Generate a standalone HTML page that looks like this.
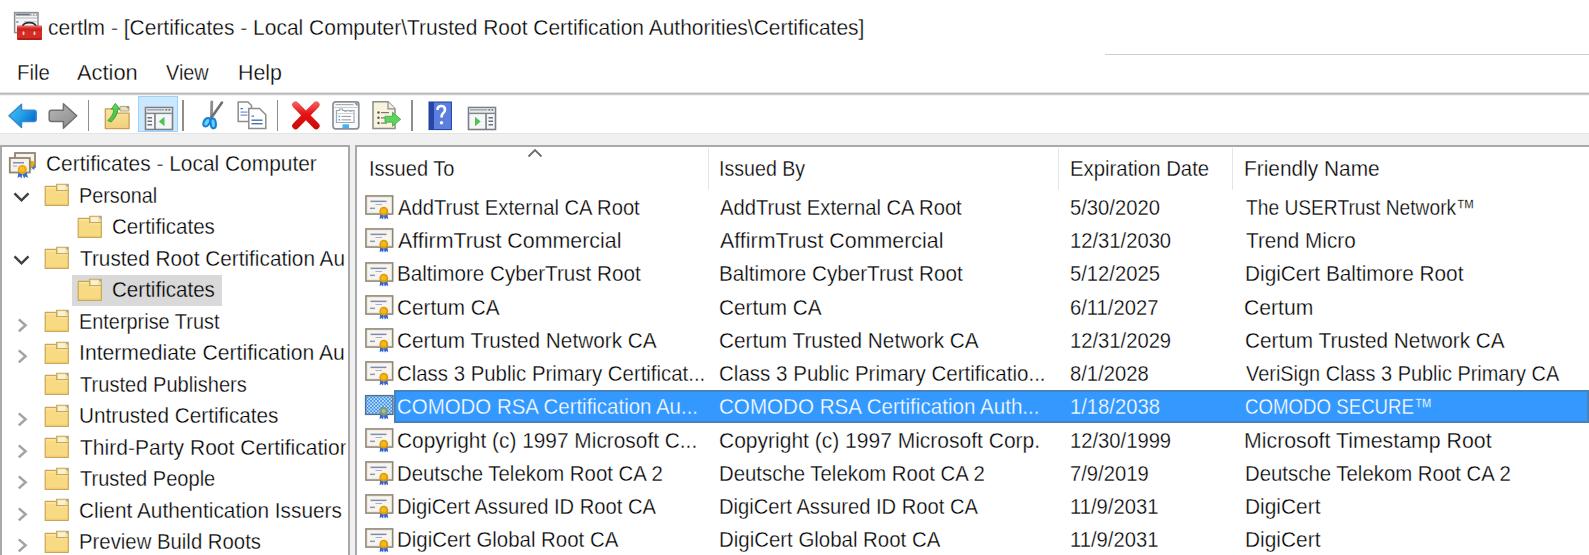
<!DOCTYPE html>
<html><head><meta charset="utf-8"><style>
html,body{margin:0;padding:0;}
body{width:1589px;height:555px;overflow:hidden;position:relative;background:#fff;font-family:"Liberation Sans",sans-serif;}
.abs{position:absolute;}
.ic{position:absolute;overflow:visible;}
.t{position:absolute;white-space:pre;font-size:21px;line-height:24px;transform-origin:0 19.5px;color:#000;-webkit-text-stroke:0.3px #fff;}
</style></head><body>
<div class="abs" style="left:1105px;top:54px;width:484px;height:1px;background:#cfcfcf"></div>
<svg class="ic" style="left:13px;top:11px" width="31" height="31" viewBox="0 0 31 31">
<rect x="1.6" y="1.6" width="23.4" height="20" fill="#f3f4f6" stroke="#8c9198" stroke-width="1.5"/>
<rect x="2.4" y="2.4" width="21.8" height="2.4" fill="#a2a7ae"/>
<rect x="3.5" y="2.9" width="13" height="1.2" fill="#6f747c"/><rect x="18.5" y="2.8" width="1.5" height="1.5" fill="#fff"/><rect x="21.5" y="2.8" width="1.5" height="1.5" fill="#fff"/>
<rect x="2.4" y="6.5" width="21.8" height="1" fill="#b2b7be"/>
<rect x="3.2" y="10" width="2.2" height="2" fill="#9aa0a8"/>
<rect x="11" y="10.2" width="12.5" height="1" fill="#b8bcc2"/>
<path d="M9.5 15.5 Q10.5 11.6 16.3 11.6 Q22 11.6 23 15.5" fill="none" stroke="#2e2e2e" stroke-width="1.8"/>
<path d="M4 14.8 H29 V27.6 Q29 29 27.6 29 H5.4 Q4 29 4 27.6 Z" fill="#d42d26"/>
<rect x="4" y="14.8" width="25" height="1.6" fill="#e8605a"/>
<rect x="4" y="18.5" width="25" height="1" fill="#b82018"/>
<ellipse cx="10.5" cy="22.2" rx="1" ry="2" fill="#f4c4be"/>
<ellipse cx="21.5" cy="22.2" rx="1" ry="2" fill="#f4c4be"/>
<rect x="4.5" y="27" width="24" height="2" fill="#b31d18"/>
</svg>
<div class="t" style="left:47.50px;top:15.50px;transform:scale(0.9988,1.055);color:#000;">certlm - [Certificates - Local Computer\Trusted Root Certification Authorities\Certificates]</div>
<div class="t" style="left:17.33px;top:60.70px;transform:scale(0.9702,1.055);color:#000;">File</div>
<div class="t" style="left:77.40px;top:60.70px;transform:scale(1.0401,1.055);color:#000;">Action</div>
<div class="t" style="left:166.00px;top:60.70px;transform:scale(0.9462,1.055);color:#000;">View</div>
<div class="t" style="left:237.68px;top:60.70px;transform:scale(1.0190,1.055);color:#000;">Help</div>
<div class="abs" style="left:0;top:92px;width:1589px;height:1px;background:#e4e4e6"></div>
<div class="abs" style="left:0;top:93px;width:1589px;height:1px;background:#b7b7ba"></div>
<div class="abs" style="left:0;top:94px;width:1589px;height:1px;background:#cdcdd0"></div>
<div class="abs" style="left:0;top:95px;width:1589px;height:1px;background:#f2f2f2"></div>
<div class="abs" style="left:0;top:133px;width:1589px;height:422px;background:#f0f0f0"></div>
<div class="abs" style="left:0;top:133px;width:1589px;height:1px;background:#e4e4e4"></div>
<div class="abs" style="left:138.3px;top:96.2px;width:39.5px;height:35.5px;background:#cce8ff;box-sizing:border-box;border:1.4px solid #99d1ff"></div>
<div class="abs" style="left:87.6px;top:99.5px;width:1.6px;height:31px;background:#8e8e8e"></div>
<div class="abs" style="left:182.0px;top:99.5px;width:1.6px;height:31px;background:#8e8e8e"></div>
<div class="abs" style="left:276.7px;top:99.5px;width:1.6px;height:31px;background:#8e8e8e"></div>
<div class="abs" style="left:411.4px;top:99.5px;width:1.6px;height:31px;background:#8e8e8e"></div>
<svg class="ic" style="left:6px;top:101px" width="34" height="30" viewBox="0 0 34 30">
<defs><linearGradient id="gb" x1="0" y1="0" x2="1" y2="0.6"><stop offset="0" stop-color="#4fc0f6"/><stop offset="0.5" stop-color="#27a4ec"/><stop offset="1" stop-color="#066fd0"/></linearGradient></defs>
<path d="M3 14.8 L15.5 3.2 V9.3 H28 Q30.2 9.3 30.2 11.5 V18.2 Q30.2 20.4 28 20.4 H15.5 V26.5 Z" fill="url(#gb)" stroke="#3a88cc" stroke-width="1.5" stroke-linejoin="round"/>
</svg>
<svg class="ic" style="left:46px;top:101px" width="34" height="30" viewBox="0 0 34 30">
<defs><linearGradient id="gg" x1="0" y1="0" x2="1" y2="1"><stop offset="0" stop-color="#b8b8b8"/><stop offset="1" stop-color="#8a8a8a"/></linearGradient></defs>
<path d="M30.8 14.8 L17.4 2.8 V9.3 H5.4 Q3.2 9.3 3.2 11.5 V18.2 Q3.2 20.4 5.4 20.4 H17.4 V27.2 Z" fill="url(#gg)" stroke="#707070" stroke-width="1.5" stroke-linejoin="round"/>
</svg>
<svg class="ic" style="left:102px;top:100px" width="30" height="32" viewBox="0 0 30 32">
<defs><linearGradient id="gf" x1="0" y1="0" x2="0" y2="1"><stop offset="0" stop-color="#fbe3a0"/><stop offset="1" stop-color="#f2cf7a"/></linearGradient>
<linearGradient id="ga" x1="0" y1="0" x2="1" y2="1"><stop offset="0" stop-color="#7be86f"/><stop offset="1" stop-color="#2fae2f"/></linearGradient></defs>
<path d="M18 6.4 H27 V11 H18 Z" fill="#ece0bf" stroke="#b9a57a" stroke-width="1"/>
<path d="M23.5 6.6 L26.8 9.5 V6.6 Z" fill="#8a929c"/>
<path d="M3.3 8.8 H14.5 V13.2 H27.1 V28.6 H3.3 Z" fill="url(#gf)" stroke="#c4a059" stroke-width="1.3" stroke-linejoin="round"/>
<path d="M9.3 9.2 L13.3 3.4 L18 9.2 L15.6 9.2 C15.9 13.4 13.4 17.6 9.2 22 L5.8 20.6 C9.6 16.6 12 13.2 11.6 9.2 Z" fill="url(#ga)" stroke="#34a034" stroke-width="0.9" stroke-linejoin="round"/>
</svg>
<svg class="ic" style="left:144px;top:105.5px" width="30" height="25" viewBox="0 0 30 25">
<rect x="1.5" y="1.5" width="27" height="22" fill="#f4f6f8" stroke="#7a7f86" stroke-width="1.6"/>
<rect x="2.2" y="2.2" width="25.6" height="3.2" fill="#d9dce0"/><rect x="3" y="3.2" width="17" height="1.2" fill="#9a9fa6"/><rect x="21.5" y="3" width="1.6" height="1.6" fill="#70757c"/><rect x="24.5" y="3" width="1.6" height="1.6" fill="#70757c"/>
<rect x="2.2" y="6.6" width="25.6" height="1.5" fill="#80858c"/>
<rect x="10.2" y="8" width="1.5" height="15" fill="#6f747c"/>
<rect x="3.5" y="11" width="4.5" height="1.5" fill="#6f747c"/><rect x="3.5" y="14.5" width="4.5" height="1.5" fill="#6f747c"/><rect x="3.5" y="18" width="4.5" height="1.5" fill="#6f747c"/>
<path d="M14.8 15.5 L20.5 10.8 V20.2 Z" fill="#52c052"/>
</svg>
<svg class="ic" style="left:198px;top:98px" width="30" height="34" viewBox="0 0 30 34">
<path d="M13.8 4 L13.4 19" stroke="#8c8c8c" stroke-width="2.8" stroke-linecap="round"/>
<path d="M24 4.5 L13.5 19.5" stroke="#707070" stroke-width="2.6" stroke-linecap="round"/>
<ellipse cx="8.8" cy="24.2" rx="2.9" ry="4.6" transform="rotate(32 8.8 24.2)" fill="#6fd0ff" stroke="#1482d6" stroke-width="2.2"/>
<ellipse cx="15.2" cy="25.4" rx="2.6" ry="4.9" transform="rotate(-6 15.2 25.4)" fill="#6fd0ff" stroke="#1482d6" stroke-width="2.2"/>
</svg>
<svg class="ic" style="left:236px;top:100px" width="32" height="31" viewBox="0 0 32 31">
<path d="M2.2 2 H12 L15.5 5.5 V21.5 H2.2 Z" fill="#fff" stroke="#8c8c8c" stroke-width="1.5"/>
<rect x="4.5" y="8" width="2.5" height="1.2" fill="#4a6fb0"/><rect x="4.5" y="11.5" width="7" height="1.2" fill="#6f8fc8"/><rect x="4.5" y="14.5" width="7" height="1.2" fill="#6f8fc8"/>
<path d="M12.8 8.5 H23.5 L29.8 14.8 V28.5 H12.8 Z" fill="#fff" stroke="#8c8c8c" stroke-width="1.5"/>
<rect x="15.5" y="15.5" width="2.5" height="1.2" fill="#4a6fb0"/><rect x="15.5" y="19.5" width="11" height="1.4" fill="#4a6fb0"/><rect x="15.5" y="23" width="11" height="1.4" fill="#4a6fb0"/>
</svg>
<svg class="ic" style="left:290px;top:99.5px" width="32" height="31" viewBox="0 0 32 31">
<defs><linearGradient id="gr" gradientUnits="userSpaceOnUse" x1="0" y1="1" x2="0" y2="30"><stop offset="0" stop-color="#f06a6a"/><stop offset="0.45" stop-color="#e81212"/><stop offset="1" stop-color="#c80a0a"/></linearGradient></defs>
<path d="M5.6 4.8 L26.2 25.8 M26.2 4.8 L5.6 25.8" fill="none" stroke="url(#gr)" stroke-width="6.8" stroke-linecap="round"/>
</svg>
<svg class="ic" style="left:331px;top:100px" width="30" height="31" viewBox="0 0 30 31">
<rect x="2" y="1.8" width="25.8" height="27" rx="2.5" fill="#f9fafb" stroke="#8a8f96" stroke-width="1.7"/>
<rect x="4.5" y="4" width="18" height="1.2" fill="#a9aeb5"/>
<path d="M23.5 3.2 H26.5 V6.2 Z" fill="#6f747c"/>
<rect x="3" y="7" width="23.8" height="0.9" fill="#c5c9ce"/>
<path d="M5.5 10.5 H8.5 V9 H11.5 V10.5 H23 V22.5 H5.5 Z" fill="#fff" stroke="#a3a8ae" stroke-width="1.2"/>
<rect x="13" y="10.9" width="3.5" height="1" fill="#b9bec4"/><rect x="18" y="10.9" width="3.5" height="1" fill="#b9bec4"/>
<rect x="6.2" y="13" width="16.2" height="0.8" fill="#c2c6cb"/>
<rect x="7.5" y="15.6" width="1.6" height="1.6" fill="#5aa8dc"/><rect x="10.5" y="15.9" width="9.5" height="1.1" fill="#9aa0a8"/>
<rect x="7.5" y="19" width="1.6" height="1.6" fill="#5aa8dc"/><rect x="10.5" y="19.3" width="9.5" height="1.1" fill="#9aa0a8"/>
<rect x="11.5" y="24.3" width="6.5" height="3.8" fill="#45b2ee"/>
</svg>
<svg class="ic" style="left:371px;top:100px" width="32" height="31" viewBox="0 0 32 31">
<path d="M2 1.8 H17 L24 8.8 V28.5 H2 Z" fill="#f8f3dc" stroke="#8c8c8c" stroke-width="1.5"/>
<path d="M17 1.8 V8.8 H24" fill="#eee" stroke="#8c8c8c" stroke-width="1.2"/>
<circle cx="7.5" cy="12.5" r="1.2" fill="#555"/><rect x="10" y="12" width="8" height="1.2" fill="#777"/>
<circle cx="7.5" cy="17.8" r="1.2" fill="#555"/><rect x="10" y="17.3" width="6" height="1.2" fill="#777"/>
<circle cx="7.5" cy="23" r="1.2" fill="#555"/><rect x="10" y="22.5" width="6" height="1.2" fill="#777"/>
<path d="M14 16.3 H21.5 V12.2 L29.7 19.3 L21.5 26.2 V22.2 H14 Z" fill="#5fd35f" stroke="#3ea83e" stroke-width="0.8"/>
</svg>
<svg class="ic" style="left:428px;top:100.5px" width="25" height="30" viewBox="0 0 25 30">
<rect x="1" y="1" width="22.4" height="27.6" fill="#5577d6"/>
<rect x="1" y="1" width="5" height="27.6" fill="#2945a8"/>
<rect x="6" y="1" width="17.4" height="27.6" fill="#5b7fde"/>
<rect x="1" y="1" width="22.4" height="27.6" fill="none" stroke="#24409a" stroke-width="1"/>
<path d="M9.5 9 Q9.5 5 13.2 5 Q17 5 17 8.7 Q17 11 14.8 12.6 Q13.5 13.6 13.5 16.5" fill="none" stroke="#fff" stroke-width="2.6"/>
<circle cx="13.5" cy="21.8" r="1.7" fill="#fff"/>
</svg>
<svg class="ic" style="left:466.5px;top:105.5px" width="30" height="25" viewBox="0 0 30 25">
<rect x="1.5" y="1.5" width="27" height="22" fill="#f4f6f8" stroke="#7a7f86" stroke-width="1.6"/>
<rect x="2.2" y="2.2" width="25.6" height="3.2" fill="#d9dce0"/><rect x="3" y="3.2" width="17" height="1.2" fill="#9a9fa6"/><rect x="21.5" y="3" width="1.6" height="1.6" fill="#70757c"/><rect x="24.5" y="3" width="1.6" height="1.6" fill="#70757c"/>
<rect x="2.2" y="6.6" width="25.6" height="1.5" fill="#80858c"/>
<rect x="18.3" y="8" width="1.5" height="15" fill="#6f747c"/>
<rect x="21.5" y="11" width="4.5" height="1.5" fill="#6f747c"/><rect x="21.5" y="14.5" width="4.5" height="1.5" fill="#6f747c"/><rect x="21.5" y="18" width="4.5" height="1.5" fill="#6f747c"/>
<path d="M13.7 15.5 L8 10.8 V20.2 Z" fill="#52c052"/>
</svg>
<div class="abs" style="left:0;top:145px;width:350px;height:410px;background:#fff"></div>
<div class="abs" style="left:0;top:145px;width:350px;height:2px;background:#a9a9ab"></div>
<div class="abs" style="left:0;top:145px;width:2px;height:410px;background:#a9a9ab"></div>
<div class="abs" style="left:348px;top:145px;width:2px;height:410px;background:#a9a9ab"></div>
<div class="abs" style="left:355px;top:145px;width:1234px;height:410px;background:#fff"></div>
<div class="abs" style="left:355px;top:145px;width:1234px;height:2px;background:#a9a9ab"></div>
<div class="abs" style="left:355px;top:145px;width:2px;height:410px;background:#a9a9ab"></div>
<div class="abs" style="left:72.1px;top:274.7px;width:149.9px;height:31px;background:#d9d9d9"></div>
<div class="abs" style="left:1.6px;top:146.6px;width:344.9px;height:408.4px;overflow:hidden"><svg class="ic" style="margin-left:-1.6px;margin-top:-146.6px;left:8px;top:151px" width="29" height="29" viewBox="0 0 29 29">
<rect x="7" y="2" width="20" height="14" fill="#f7f3ea" stroke="#8f8672" stroke-width="1.8"/>
<path d="M26 13 L23.5 18.5 L25 17.5 L26.2 19.5 L27 14.5Z M20 13 L21 19 L22.5 17.8 L24 19 Z" fill="#3a6ad0"/>
<circle cx="23" cy="13" r="3.3" fill="#e9a80c"/>
<rect x="1.8" y="7" width="20" height="14.5" fill="#f7f3ea" stroke="#8f8672" stroke-width="1.8"/>
<rect x="5" y="11" width="11" height="1.5" fill="#7f8fb8"/>
<rect x="5" y="14.5" width="4" height="1.2" fill="#a9b2c8"/>
<path d="M10.5 21 L9.5 27 L12 25.5 L13.5 27.5 L14.5 23 Z M14.5 23 L16 27.5 L17.5 25.5 L20 27 L18.5 21 Z" fill="#3a6ad0"/>
<circle cx="14.3" cy="18.5" r="4.6" fill="#e9a80c"/>
<circle cx="14" cy="18" r="2.6" fill="#f6c02a"/>
</svg><div class="t" style="margin-left:-1.6px;margin-top:-146.6px;left:45.80px;top:152.10px;transform:scale(0.9958,1.055);color:#000;">Certificates - Local Computer</div><svg class="ic" style="margin-left:-1.6px;margin-top:-146.6px;left:43.5px;top:183.29999999999998px" width="26" height="24" viewBox="0 0 26 24">
<path d="M12.6 1.2 H24.3 V8 H12.6 Z" fill="#f6e3a8" stroke="#c8a85e" stroke-width="1.1"/>
<path d="M14 2.4 H21 V7 H14 Z" fill="#faf0d2"/>
<path d="M21.2 1.6 L24 4.2 V1.6 Z" fill="#98a0a8"/>
<path d="M1.2 3.4 H12.6 V7.6 H24.3 V22.4 H1.2 Z" fill="#f8da82" stroke="#c9a65a" stroke-width="1.2" stroke-linejoin="round"/>
<path d="M1.9 4.1 H11.9 V5.8 H1.9 Z" fill="#fae3a0"/>
<path d="M13 8.2 H23.6 V9.5 H13 Z" fill="#fae3a0"/>
<path d="M1.9 20.6 H23.6 V21.8 H1.9 Z" fill="#efcc70"/>
</svg><svg class="ic" style="margin-left:-1.6px;margin-top:-146.6px;left:13.2px;top:192.1px" width="18" height="11" viewBox="0 0 18 11"><path d="M1.5 1.3 L8.5 8.4 L15.5 1.3" fill="none" stroke="#404040" stroke-width="2.4"/></svg><div class="t" style="margin-left:-1.6px;margin-top:-146.6px;left:79.06px;top:183.60px;transform:scale(0.9444,1.055);color:#000;">Personal</div><svg class="ic" style="margin-left:-1.6px;margin-top:-146.6px;left:76.8px;top:214.79999999999998px" width="26" height="24" viewBox="0 0 26 24">
<path d="M12.6 1.2 H24.3 V8 H12.6 Z" fill="#f6e3a8" stroke="#c8a85e" stroke-width="1.1"/>
<path d="M14 2.4 H21 V7 H14 Z" fill="#faf0d2"/>
<path d="M21.2 1.6 L24 4.2 V1.6 Z" fill="#98a0a8"/>
<path d="M1.2 3.4 H12.6 V7.6 H24.3 V22.4 H1.2 Z" fill="#f8da82" stroke="#c9a65a" stroke-width="1.2" stroke-linejoin="round"/>
<path d="M1.9 4.1 H11.9 V5.8 H1.9 Z" fill="#fae3a0"/>
<path d="M13 8.2 H23.6 V9.5 H13 Z" fill="#fae3a0"/>
<path d="M1.9 20.6 H23.6 V21.8 H1.9 Z" fill="#efcc70"/>
</svg><div class="t" style="margin-left:-1.6px;margin-top:-146.6px;left:112.02px;top:215.10px;transform:scale(0.9794,1.055);color:#000;">Certificates</div><svg class="ic" style="margin-left:-1.6px;margin-top:-146.6px;left:43.5px;top:246.3px" width="26" height="24" viewBox="0 0 26 24">
<path d="M12.6 1.2 H24.3 V8 H12.6 Z" fill="#f6e3a8" stroke="#c8a85e" stroke-width="1.1"/>
<path d="M14 2.4 H21 V7 H14 Z" fill="#faf0d2"/>
<path d="M21.2 1.6 L24 4.2 V1.6 Z" fill="#98a0a8"/>
<path d="M1.2 3.4 H12.6 V7.6 H24.3 V22.4 H1.2 Z" fill="#f8da82" stroke="#c9a65a" stroke-width="1.2" stroke-linejoin="round"/>
<path d="M1.9 4.1 H11.9 V5.8 H1.9 Z" fill="#fae3a0"/>
<path d="M13 8.2 H23.6 V9.5 H13 Z" fill="#fae3a0"/>
<path d="M1.9 20.6 H23.6 V21.8 H1.9 Z" fill="#efcc70"/>
</svg><svg class="ic" style="margin-left:-1.6px;margin-top:-146.6px;left:13.2px;top:255.10000000000002px" width="18" height="11" viewBox="0 0 18 11"><path d="M1.5 1.3 L8.5 8.4 L15.5 1.3" fill="none" stroke="#404040" stroke-width="2.4"/></svg><div class="t" style="margin-left:-1.6px;margin-top:-146.6px;left:80.00px;top:246.60px;transform:scale(0.9901,1.055);color:#000;">Trusted Root Certification Au</div><svg class="ic" style="margin-left:-1.6px;margin-top:-146.6px;left:76.8px;top:277.8px" width="26" height="24" viewBox="0 0 26 24">
<path d="M12.6 1.2 H24.3 V8 H12.6 Z" fill="#f6e3a8" stroke="#c8a85e" stroke-width="1.1"/>
<path d="M14 2.4 H21 V7 H14 Z" fill="#faf0d2"/>
<path d="M21.2 1.6 L24 4.2 V1.6 Z" fill="#98a0a8"/>
<path d="M1.2 3.4 H12.6 V7.6 H24.3 V22.4 H1.2 Z" fill="#f8da82" stroke="#c9a65a" stroke-width="1.2" stroke-linejoin="round"/>
<path d="M1.9 4.1 H11.9 V5.8 H1.9 Z" fill="#fae3a0"/>
<path d="M13 8.2 H23.6 V9.5 H13 Z" fill="#fae3a0"/>
<path d="M1.9 20.6 H23.6 V21.8 H1.9 Z" fill="#efcc70"/>
</svg><div class="t" style="margin-left:-1.6px;margin-top:-146.6px;left:112.02px;top:278.10px;transform:scale(0.9794,1.055);color:#000;-webkit-text-stroke-color:#d9d9d9;">Certificates</div><svg class="ic" style="margin-left:-1.6px;margin-top:-146.6px;left:43.5px;top:309.3px" width="26" height="24" viewBox="0 0 26 24">
<path d="M12.6 1.2 H24.3 V8 H12.6 Z" fill="#f6e3a8" stroke="#c8a85e" stroke-width="1.1"/>
<path d="M14 2.4 H21 V7 H14 Z" fill="#faf0d2"/>
<path d="M21.2 1.6 L24 4.2 V1.6 Z" fill="#98a0a8"/>
<path d="M1.2 3.4 H12.6 V7.6 H24.3 V22.4 H1.2 Z" fill="#f8da82" stroke="#c9a65a" stroke-width="1.2" stroke-linejoin="round"/>
<path d="M1.9 4.1 H11.9 V5.8 H1.9 Z" fill="#fae3a0"/>
<path d="M13 8.2 H23.6 V9.5 H13 Z" fill="#fae3a0"/>
<path d="M1.9 20.6 H23.6 V21.8 H1.9 Z" fill="#efcc70"/>
</svg><svg class="ic" style="margin-left:-1.6px;margin-top:-146.6px;left:16.5px;top:318.6px" width="12" height="15" viewBox="0 0 12 15"><path d="M1.8 0.4 L8.6 6.3 L1.8 12.4" fill="none" stroke="#a3a3a3" stroke-width="2.5"/></svg><div class="t" style="margin-left:-1.6px;margin-top:-146.6px;left:79.05px;top:309.60px;transform:scale(0.9474,1.055);color:#000;">Enterprise Trust</div><svg class="ic" style="margin-left:-1.6px;margin-top:-146.6px;left:43.5px;top:340.8px" width="26" height="24" viewBox="0 0 26 24">
<path d="M12.6 1.2 H24.3 V8 H12.6 Z" fill="#f6e3a8" stroke="#c8a85e" stroke-width="1.1"/>
<path d="M14 2.4 H21 V7 H14 Z" fill="#faf0d2"/>
<path d="M21.2 1.6 L24 4.2 V1.6 Z" fill="#98a0a8"/>
<path d="M1.2 3.4 H12.6 V7.6 H24.3 V22.4 H1.2 Z" fill="#f8da82" stroke="#c9a65a" stroke-width="1.2" stroke-linejoin="round"/>
<path d="M1.9 4.1 H11.9 V5.8 H1.9 Z" fill="#fae3a0"/>
<path d="M13 8.2 H23.6 V9.5 H13 Z" fill="#fae3a0"/>
<path d="M1.9 20.6 H23.6 V21.8 H1.9 Z" fill="#efcc70"/>
</svg><svg class="ic" style="margin-left:-1.6px;margin-top:-146.6px;left:16.5px;top:350.1px" width="12" height="15" viewBox="0 0 12 15"><path d="M1.8 0.4 L8.6 6.3 L1.8 12.4" fill="none" stroke="#a3a3a3" stroke-width="2.5"/></svg><div class="t" style="margin-left:-1.6px;margin-top:-146.6px;left:78.99px;top:341.10px;transform:scale(1.0077,1.055);color:#000;">Intermediate Certification Au</div><svg class="ic" style="margin-left:-1.6px;margin-top:-146.6px;left:43.5px;top:372.3px" width="26" height="24" viewBox="0 0 26 24">
<path d="M12.6 1.2 H24.3 V8 H12.6 Z" fill="#f6e3a8" stroke="#c8a85e" stroke-width="1.1"/>
<path d="M14 2.4 H21 V7 H14 Z" fill="#faf0d2"/>
<path d="M21.2 1.6 L24 4.2 V1.6 Z" fill="#98a0a8"/>
<path d="M1.2 3.4 H12.6 V7.6 H24.3 V22.4 H1.2 Z" fill="#f8da82" stroke="#c9a65a" stroke-width="1.2" stroke-linejoin="round"/>
<path d="M1.9 4.1 H11.9 V5.8 H1.9 Z" fill="#fae3a0"/>
<path d="M13 8.2 H23.6 V9.5 H13 Z" fill="#fae3a0"/>
<path d="M1.9 20.6 H23.6 V21.8 H1.9 Z" fill="#efcc70"/>
</svg><div class="t" style="margin-left:-1.6px;margin-top:-146.6px;left:80.00px;top:372.60px;transform:scale(0.9574,1.055);color:#000;">Trusted Publishers</div><svg class="ic" style="margin-left:-1.6px;margin-top:-146.6px;left:43.5px;top:403.8px" width="26" height="24" viewBox="0 0 26 24">
<path d="M12.6 1.2 H24.3 V8 H12.6 Z" fill="#f6e3a8" stroke="#c8a85e" stroke-width="1.1"/>
<path d="M14 2.4 H21 V7 H14 Z" fill="#faf0d2"/>
<path d="M21.2 1.6 L24 4.2 V1.6 Z" fill="#98a0a8"/>
<path d="M1.2 3.4 H12.6 V7.6 H24.3 V22.4 H1.2 Z" fill="#f8da82" stroke="#c9a65a" stroke-width="1.2" stroke-linejoin="round"/>
<path d="M1.9 4.1 H11.9 V5.8 H1.9 Z" fill="#fae3a0"/>
<path d="M13 8.2 H23.6 V9.5 H13 Z" fill="#fae3a0"/>
<path d="M1.9 20.6 H23.6 V21.8 H1.9 Z" fill="#efcc70"/>
</svg><svg class="ic" style="margin-left:-1.6px;margin-top:-146.6px;left:16.5px;top:413.1px" width="12" height="15" viewBox="0 0 12 15"><path d="M1.8 0.4 L8.6 6.3 L1.8 12.4" fill="none" stroke="#a3a3a3" stroke-width="2.5"/></svg><div class="t" style="margin-left:-1.6px;margin-top:-146.6px;left:79.01px;top:404.10px;transform:scale(0.9880,1.055);color:#000;">Untrusted Certificates</div><svg class="ic" style="margin-left:-1.6px;margin-top:-146.6px;left:43.5px;top:435.3px" width="26" height="24" viewBox="0 0 26 24">
<path d="M12.6 1.2 H24.3 V8 H12.6 Z" fill="#f6e3a8" stroke="#c8a85e" stroke-width="1.1"/>
<path d="M14 2.4 H21 V7 H14 Z" fill="#faf0d2"/>
<path d="M21.2 1.6 L24 4.2 V1.6 Z" fill="#98a0a8"/>
<path d="M1.2 3.4 H12.6 V7.6 H24.3 V22.4 H1.2 Z" fill="#f8da82" stroke="#c9a65a" stroke-width="1.2" stroke-linejoin="round"/>
<path d="M1.9 4.1 H11.9 V5.8 H1.9 Z" fill="#fae3a0"/>
<path d="M13 8.2 H23.6 V9.5 H13 Z" fill="#fae3a0"/>
<path d="M1.9 20.6 H23.6 V21.8 H1.9 Z" fill="#efcc70"/>
</svg><svg class="ic" style="margin-left:-1.6px;margin-top:-146.6px;left:16.5px;top:444.6px" width="12" height="15" viewBox="0 0 12 15"><path d="M1.8 0.4 L8.6 6.3 L1.8 12.4" fill="none" stroke="#a3a3a3" stroke-width="2.5"/></svg><div class="t" style="margin-left:-1.6px;margin-top:-146.6px;left:80.00px;top:435.60px;transform:scale(1.0023,1.055);color:#000;">Third-Party Root Certification Authorities</div><svg class="ic" style="margin-left:-1.6px;margin-top:-146.6px;left:43.5px;top:466.8px" width="26" height="24" viewBox="0 0 26 24">
<path d="M12.6 1.2 H24.3 V8 H12.6 Z" fill="#f6e3a8" stroke="#c8a85e" stroke-width="1.1"/>
<path d="M14 2.4 H21 V7 H14 Z" fill="#faf0d2"/>
<path d="M21.2 1.6 L24 4.2 V1.6 Z" fill="#98a0a8"/>
<path d="M1.2 3.4 H12.6 V7.6 H24.3 V22.4 H1.2 Z" fill="#f8da82" stroke="#c9a65a" stroke-width="1.2" stroke-linejoin="round"/>
<path d="M1.9 4.1 H11.9 V5.8 H1.9 Z" fill="#fae3a0"/>
<path d="M13 8.2 H23.6 V9.5 H13 Z" fill="#fae3a0"/>
<path d="M1.9 20.6 H23.6 V21.8 H1.9 Z" fill="#efcc70"/>
</svg><svg class="ic" style="margin-left:-1.6px;margin-top:-146.6px;left:16.5px;top:476.1px" width="12" height="15" viewBox="0 0 12 15"><path d="M1.8 0.4 L8.6 6.3 L1.8 12.4" fill="none" stroke="#a3a3a3" stroke-width="2.5"/></svg><div class="t" style="margin-left:-1.6px;margin-top:-146.6px;left:80.00px;top:467.10px;transform:scale(0.9549,1.055);color:#000;">Trusted People</div><svg class="ic" style="margin-left:-1.6px;margin-top:-146.6px;left:43.5px;top:498.3px" width="26" height="24" viewBox="0 0 26 24">
<path d="M12.6 1.2 H24.3 V8 H12.6 Z" fill="#f6e3a8" stroke="#c8a85e" stroke-width="1.1"/>
<path d="M14 2.4 H21 V7 H14 Z" fill="#faf0d2"/>
<path d="M21.2 1.6 L24 4.2 V1.6 Z" fill="#98a0a8"/>
<path d="M1.2 3.4 H12.6 V7.6 H24.3 V22.4 H1.2 Z" fill="#f8da82" stroke="#c9a65a" stroke-width="1.2" stroke-linejoin="round"/>
<path d="M1.9 4.1 H11.9 V5.8 H1.9 Z" fill="#fae3a0"/>
<path d="M13 8.2 H23.6 V9.5 H13 Z" fill="#fae3a0"/>
<path d="M1.9 20.6 H23.6 V21.8 H1.9 Z" fill="#efcc70"/>
</svg><svg class="ic" style="margin-left:-1.6px;margin-top:-146.6px;left:16.5px;top:507.6px" width="12" height="15" viewBox="0 0 12 15"><path d="M1.8 0.4 L8.6 6.3 L1.8 12.4" fill="none" stroke="#a3a3a3" stroke-width="2.5"/></svg><div class="t" style="margin-left:-1.6px;margin-top:-146.6px;left:79.01px;top:498.60px;transform:scale(0.9923,1.055);color:#000;">Client Authentication Issuers</div><svg class="ic" style="margin-left:-1.6px;margin-top:-146.6px;left:43.5px;top:529.8000000000001px" width="26" height="24" viewBox="0 0 26 24">
<path d="M12.6 1.2 H24.3 V8 H12.6 Z" fill="#f6e3a8" stroke="#c8a85e" stroke-width="1.1"/>
<path d="M14 2.4 H21 V7 H14 Z" fill="#faf0d2"/>
<path d="M21.2 1.6 L24 4.2 V1.6 Z" fill="#98a0a8"/>
<path d="M1.2 3.4 H12.6 V7.6 H24.3 V22.4 H1.2 Z" fill="#f8da82" stroke="#c9a65a" stroke-width="1.2" stroke-linejoin="round"/>
<path d="M1.9 4.1 H11.9 V5.8 H1.9 Z" fill="#fae3a0"/>
<path d="M13 8.2 H23.6 V9.5 H13 Z" fill="#fae3a0"/>
<path d="M1.9 20.6 H23.6 V21.8 H1.9 Z" fill="#efcc70"/>
</svg><svg class="ic" style="margin-left:-1.6px;margin-top:-146.6px;left:16.5px;top:539.1px" width="12" height="15" viewBox="0 0 12 15"><path d="M1.8 0.4 L8.6 6.3 L1.8 12.4" fill="none" stroke="#a3a3a3" stroke-width="2.5"/></svg><div class="t" style="margin-left:-1.6px;margin-top:-146.6px;left:79.03px;top:530.10px;transform:scale(0.9683,1.055);color:#000;">Preview Build Roots</div></div>
<div class="abs" style="left:707.5px;top:148px;width:1px;height:42px;background:#e5e5e5"></div>
<div class="abs" style="left:1057.5px;top:148px;width:1px;height:42px;background:#e5e5e5"></div>
<div class="abs" style="left:1232.3px;top:148px;width:1px;height:42px;background:#e5e5e5"></div>
<svg class="ic" style="left:527px;top:148px" width="16" height="10" viewBox="0 0 16 10"><path d="M1.5 8.5 L8 2 L14.5 8.5" fill="none" stroke="#6d6d6d" stroke-width="1.8"/></svg>
<div class="t" style="left:369.45px;top:156.90px;transform:scale(0.9546,1.055);color:#000;">Issued To</div>
<div class="t" style="left:718.67px;top:156.90px;transform:scale(0.9344,1.055);color:#000;">Issued By</div>
<div class="t" style="left:1069.53px;top:156.90px;transform:scale(0.9690,1.055);color:#000;">Expiration Date</div>
<div class="t" style="left:1244.21px;top:156.90px;transform:scale(0.9936,1.055);color:#000;">Friendly Name</div>
<svg class="ic" style="left:365px;top:195.2px" width="30" height="26" viewBox="0 0 30 26">
<rect x="1" y="1" width="26.6" height="18" fill="#f8f5ee" stroke="#8d8576" stroke-width="1.7"/>
<rect x="2.2" y="2.2" width="24.2" height="15.6" fill="none" stroke="#e9e3d6" stroke-width="0.8"/>
<rect x="5.5" y="5.6" width="16" height="1.5" fill="#7d8db8"/>
<rect x="10.5" y="9" width="6.5" height="1" fill="#a7b0c8"/>
<rect x="5" y="12.6" width="5" height="1.5" fill="#8b98c0"/>
<path d="M15.2 19 L14.6 24.2 L16.6 23 L18 24.6 L19 20.5 Z M18.6 20.5 L19.8 24.6 L21.3 23 L23.2 24.2 L22.4 19 Z" fill="#3a67cf"/>
<circle cx="18.8" cy="16.2" r="4.4" fill="#dd9c06"/>
<circle cx="18.6" cy="15.9" r="2.7" fill="#f2b81c"/>
</svg>
<div class="t" style="left:398.40px;top:195.80px;transform:scale(0.9618,1.055);color:#000;">AddTrust External CA Root</div>
<div class="t" style="left:720.40px;top:195.80px;transform:scale(0.9618,1.055);color:#000;">AddTrust External CA Root</div>
<div class="t" style="left:1069.80px;top:195.80px;transform:scale(0.9620,1.055);color:#000;">5/30/2020</div>
<div class="t" style="left:1245.50px;top:195.80px;transform:scale(0.9140,1.055);color:#000;">The USERTrust Network™</div>
<svg class="ic" style="left:365px;top:228.45px" width="30" height="26" viewBox="0 0 30 26">
<rect x="1" y="1" width="26.6" height="18" fill="#f8f5ee" stroke="#8d8576" stroke-width="1.7"/>
<rect x="2.2" y="2.2" width="24.2" height="15.6" fill="none" stroke="#e9e3d6" stroke-width="0.8"/>
<rect x="5.5" y="5.6" width="16" height="1.5" fill="#7d8db8"/>
<rect x="10.5" y="9" width="6.5" height="1" fill="#a7b0c8"/>
<rect x="5" y="12.6" width="5" height="1.5" fill="#8b98c0"/>
<path d="M15.2 19 L14.6 24.2 L16.6 23 L18 24.6 L19 20.5 Z M18.6 20.5 L19.8 24.6 L21.3 23 L23.2 24.2 L22.4 19 Z" fill="#3a67cf"/>
<circle cx="18.8" cy="16.2" r="4.4" fill="#dd9c06"/>
<circle cx="18.6" cy="15.9" r="2.7" fill="#f2b81c"/>
</svg>
<div class="t" style="left:398.40px;top:229.05px;transform:scale(1.0184,1.055);color:#000;">AffirmTrust Commercial</div>
<div class="t" style="left:720.40px;top:229.05px;transform:scale(1.0184,1.055);color:#000;">AffirmTrust Commercial</div>
<div class="t" style="left:1069.80px;top:229.05px;transform:scale(0.9620,1.055);color:#000;">12/31/2030</div>
<div class="t" style="left:1245.50px;top:229.05px;transform:scale(0.9858,1.055);color:#000;">Trend Micro</div>
<svg class="ic" style="left:365px;top:261.7px" width="30" height="26" viewBox="0 0 30 26">
<rect x="1" y="1" width="26.6" height="18" fill="#f8f5ee" stroke="#8d8576" stroke-width="1.7"/>
<rect x="2.2" y="2.2" width="24.2" height="15.6" fill="none" stroke="#e9e3d6" stroke-width="0.8"/>
<rect x="5.5" y="5.6" width="16" height="1.5" fill="#7d8db8"/>
<rect x="10.5" y="9" width="6.5" height="1" fill="#a7b0c8"/>
<rect x="5" y="12.6" width="5" height="1.5" fill="#8b98c0"/>
<path d="M15.2 19 L14.6 24.2 L16.6 23 L18 24.6 L19 20.5 Z M18.6 20.5 L19.8 24.6 L21.3 23 L23.2 24.2 L22.4 19 Z" fill="#3a67cf"/>
<circle cx="18.8" cy="16.2" r="4.4" fill="#dd9c06"/>
<circle cx="18.6" cy="15.9" r="2.7" fill="#f2b81c"/>
</svg>
<div class="t" style="left:397.42px;top:262.30px;transform:scale(0.9836,1.055);color:#000;">Baltimore CyberTrust Root</div>
<div class="t" style="left:719.42px;top:262.30px;transform:scale(0.9836,1.055);color:#000;">Baltimore CyberTrust Root</div>
<div class="t" style="left:1069.80px;top:262.30px;transform:scale(0.9620,1.055);color:#000;">5/12/2025</div>
<div class="t" style="left:1244.51px;top:262.30px;transform:scale(0.9903,1.055);color:#000;">DigiCert Baltimore Root</div>
<svg class="ic" style="left:365px;top:294.95px" width="30" height="26" viewBox="0 0 30 26">
<rect x="1" y="1" width="26.6" height="18" fill="#f8f5ee" stroke="#8d8576" stroke-width="1.7"/>
<rect x="2.2" y="2.2" width="24.2" height="15.6" fill="none" stroke="#e9e3d6" stroke-width="0.8"/>
<rect x="5.5" y="5.6" width="16" height="1.5" fill="#7d8db8"/>
<rect x="10.5" y="9" width="6.5" height="1" fill="#a7b0c8"/>
<rect x="5" y="12.6" width="5" height="1.5" fill="#8b98c0"/>
<path d="M15.2 19 L14.6 24.2 L16.6 23 L18 24.6 L19 20.5 Z M18.6 20.5 L19.8 24.6 L21.3 23 L23.2 24.2 L22.4 19 Z" fill="#3a67cf"/>
<circle cx="18.8" cy="16.2" r="4.4" fill="#dd9c06"/>
<circle cx="18.6" cy="15.9" r="2.7" fill="#f2b81c"/>
</svg>
<div class="t" style="left:397.41px;top:295.55px;transform:scale(0.9869,1.055);color:#000;">Certum CA</div>
<div class="t" style="left:719.41px;top:295.55px;transform:scale(0.9869,1.055);color:#000;">Certum CA</div>
<div class="t" style="left:1069.80px;top:295.55px;transform:scale(0.9620,1.055);color:#000;">6/11/2027</div>
<div class="t" style="left:1244.49px;top:295.55px;transform:scale(1.0067,1.055);color:#000;">Certum</div>
<svg class="ic" style="left:365px;top:328.2px" width="30" height="26" viewBox="0 0 30 26">
<rect x="1" y="1" width="26.6" height="18" fill="#f8f5ee" stroke="#8d8576" stroke-width="1.7"/>
<rect x="2.2" y="2.2" width="24.2" height="15.6" fill="none" stroke="#e9e3d6" stroke-width="0.8"/>
<rect x="5.5" y="5.6" width="16" height="1.5" fill="#7d8db8"/>
<rect x="10.5" y="9" width="6.5" height="1" fill="#a7b0c8"/>
<rect x="5" y="12.6" width="5" height="1.5" fill="#8b98c0"/>
<path d="M15.2 19 L14.6 24.2 L16.6 23 L18 24.6 L19 20.5 Z M18.6 20.5 L19.8 24.6 L21.3 23 L23.2 24.2 L22.4 19 Z" fill="#3a67cf"/>
<circle cx="18.8" cy="16.2" r="4.4" fill="#dd9c06"/>
<circle cx="18.6" cy="15.9" r="2.7" fill="#f2b81c"/>
</svg>
<div class="t" style="left:397.41px;top:328.80px;transform:scale(0.9888,1.055);color:#000;">Certum Trusted Network CA</div>
<div class="t" style="left:719.41px;top:328.80px;transform:scale(0.9888,1.055);color:#000;">Certum Trusted Network CA</div>
<div class="t" style="left:1069.80px;top:328.80px;transform:scale(0.9620,1.055);color:#000;">12/31/2029</div>
<div class="t" style="left:1244.51px;top:328.80px;transform:scale(0.9888,1.055);color:#000;">Certum Trusted Network CA</div>
<svg class="ic" style="left:365px;top:361.45px" width="30" height="26" viewBox="0 0 30 26">
<rect x="1" y="1" width="26.6" height="18" fill="#f8f5ee" stroke="#8d8576" stroke-width="1.7"/>
<rect x="2.2" y="2.2" width="24.2" height="15.6" fill="none" stroke="#e9e3d6" stroke-width="0.8"/>
<rect x="5.5" y="5.6" width="16" height="1.5" fill="#7d8db8"/>
<rect x="10.5" y="9" width="6.5" height="1" fill="#a7b0c8"/>
<rect x="5" y="12.6" width="5" height="1.5" fill="#8b98c0"/>
<path d="M15.2 19 L14.6 24.2 L16.6 23 L18 24.6 L19 20.5 Z M18.6 20.5 L19.8 24.6 L21.3 23 L23.2 24.2 L22.4 19 Z" fill="#3a67cf"/>
<circle cx="18.8" cy="16.2" r="4.4" fill="#dd9c06"/>
<circle cx="18.6" cy="15.9" r="2.7" fill="#f2b81c"/>
</svg>
<div class="t" style="left:397.43px;top:362.05px;transform:scale(0.9712,1.055);color:#000;">Class 3 Public Primary Certificat...</div>
<div class="t" style="left:719.42px;top:362.05px;transform:scale(0.9785,1.055);color:#000;">Class 3 Public Primary Certificatio...</div>
<div class="t" style="left:1069.80px;top:362.05px;transform:scale(0.9620,1.055);color:#000;">8/1/2028</div>
<div class="t" style="left:1245.50px;top:362.05px;transform:scale(0.9483,1.055);color:#000;">VeriSign Class 3 Public Primary CA</div>
<div class="abs" style="left:394px;top:390.00px;width:1195px;height:32.8px;background:#3399ff"></div>
<div class="abs" style="left:394px;top:390.00px;width:1195px;height:32.8px;box-sizing:border-box;border:2px solid rgba(100,100,100,.45)"></div>
<svg class="ic" style="left:365px;top:394.7px" width="30" height="26" viewBox="0 0 30 26">
<defs><pattern id="chk" width="3.4" height="3.4" patternUnits="userSpaceOnUse"><rect width="3.4" height="3.4" fill="#bfe0ff"/><rect width="1.7" height="1.7" fill="#3b8ce4"/><rect x="1.7" y="1.7" width="1.7" height="1.7" fill="#3b8ce4"/></pattern></defs>
<rect x="0.6" y="0.6" width="27.4" height="18.8" fill="url(#chk)" stroke="#52708f" stroke-width="1.4"/>
<path d="M15.2 19 L14.6 24.2 L16.6 23 L18 24.6 L19 20.5 Z M18.6 20.5 L19.8 24.6 L21.3 23 L23.2 24.2 L22.4 19 Z" fill="#3a67cf"/>
<circle cx="18.8" cy="16.2" r="4.2" fill="#7e9a76"/>
<circle cx="18.6" cy="15.9" r="2" fill="#a9c0a0"/>
</svg>
<div class="t" style="left:397.43px;top:395.30px;transform:scale(0.9733,1.055);color:#fff;-webkit-text-stroke-color:#3399ff;">COMODO RSA Certification Au...</div>
<div class="t" style="left:719.42px;top:395.30px;transform:scale(0.9808,1.055);color:#fff;-webkit-text-stroke-color:#3399ff;">COMODO RSA Certification Auth...</div>
<div class="t" style="left:1069.80px;top:395.30px;transform:scale(0.9620,1.055);color:#fff;-webkit-text-stroke-color:#3399ff;">1/18/2038</div>
<div class="t" style="left:1244.61px;top:395.30px;transform:scale(0.8887,1.055);color:#fff;-webkit-text-stroke-color:#3399ff;">COMODO SECURE™</div>
<svg class="ic" style="left:365px;top:427.95px" width="30" height="26" viewBox="0 0 30 26">
<rect x="1" y="1" width="26.6" height="18" fill="#f8f5ee" stroke="#8d8576" stroke-width="1.7"/>
<rect x="2.2" y="2.2" width="24.2" height="15.6" fill="none" stroke="#e9e3d6" stroke-width="0.8"/>
<rect x="5.5" y="5.6" width="16" height="1.5" fill="#7d8db8"/>
<rect x="10.5" y="9" width="6.5" height="1" fill="#a7b0c8"/>
<rect x="5" y="12.6" width="5" height="1.5" fill="#8b98c0"/>
<path d="M15.2 19 L14.6 24.2 L16.6 23 L18 24.6 L19 20.5 Z M18.6 20.5 L19.8 24.6 L21.3 23 L23.2 24.2 L22.4 19 Z" fill="#3a67cf"/>
<circle cx="18.8" cy="16.2" r="4.4" fill="#dd9c06"/>
<circle cx="18.6" cy="15.9" r="2.7" fill="#f2b81c"/>
</svg>
<div class="t" style="left:397.41px;top:428.55px;transform:scale(0.9932,1.055);color:#000;">Copyright (c) 1997 Microsoft C...</div>
<div class="t" style="left:719.40px;top:428.55px;transform:scale(1.0006,1.055);color:#000;">Copyright (c) 1997 Microsoft Corp.</div>
<div class="t" style="left:1069.80px;top:428.55px;transform:scale(0.9620,1.055);color:#000;">12/30/1999</div>
<div class="t" style="left:1244.48px;top:428.55px;transform:scale(1.0150,1.055);color:#000;">Microsoft Timestamp Root</div>
<svg class="ic" style="left:365px;top:461.2px" width="30" height="26" viewBox="0 0 30 26">
<rect x="1" y="1" width="26.6" height="18" fill="#f8f5ee" stroke="#8d8576" stroke-width="1.7"/>
<rect x="2.2" y="2.2" width="24.2" height="15.6" fill="none" stroke="#e9e3d6" stroke-width="0.8"/>
<rect x="5.5" y="5.6" width="16" height="1.5" fill="#7d8db8"/>
<rect x="10.5" y="9" width="6.5" height="1" fill="#a7b0c8"/>
<rect x="5" y="12.6" width="5" height="1.5" fill="#8b98c0"/>
<path d="M15.2 19 L14.6 24.2 L16.6 23 L18 24.6 L19 20.5 Z M18.6 20.5 L19.8 24.6 L21.3 23 L23.2 24.2 L22.4 19 Z" fill="#3a67cf"/>
<circle cx="18.8" cy="16.2" r="4.4" fill="#dd9c06"/>
<circle cx="18.6" cy="15.9" r="2.7" fill="#f2b81c"/>
</svg>
<div class="t" style="left:397.43px;top:461.80px;transform:scale(0.9701,1.055);color:#000;">Deutsche Telekom Root CA 2</div>
<div class="t" style="left:719.43px;top:461.80px;transform:scale(0.9701,1.055);color:#000;">Deutsche Telekom Root CA 2</div>
<div class="t" style="left:1069.80px;top:461.80px;transform:scale(0.9620,1.055);color:#000;">7/9/2019</div>
<div class="t" style="left:1244.53px;top:461.80px;transform:scale(0.9701,1.055);color:#000;">Deutsche Telekom Root CA 2</div>
<svg class="ic" style="left:365px;top:494.45px" width="30" height="26" viewBox="0 0 30 26">
<rect x="1" y="1" width="26.6" height="18" fill="#f8f5ee" stroke="#8d8576" stroke-width="1.7"/>
<rect x="2.2" y="2.2" width="24.2" height="15.6" fill="none" stroke="#e9e3d6" stroke-width="0.8"/>
<rect x="5.5" y="5.6" width="16" height="1.5" fill="#7d8db8"/>
<rect x="10.5" y="9" width="6.5" height="1" fill="#a7b0c8"/>
<rect x="5" y="12.6" width="5" height="1.5" fill="#8b98c0"/>
<path d="M15.2 19 L14.6 24.2 L16.6 23 L18 24.6 L19 20.5 Z M18.6 20.5 L19.8 24.6 L21.3 23 L23.2 24.2 L22.4 19 Z" fill="#3a67cf"/>
<circle cx="18.8" cy="16.2" r="4.4" fill="#dd9c06"/>
<circle cx="18.6" cy="15.9" r="2.7" fill="#f2b81c"/>
</svg>
<div class="t" style="left:397.44px;top:495.05px;transform:scale(0.9609,1.055);color:#000;">DigiCert Assured ID Root CA</div>
<div class="t" style="left:719.44px;top:495.05px;transform:scale(0.9609,1.055);color:#000;">DigiCert Assured ID Root CA</div>
<div class="t" style="left:1069.80px;top:495.05px;transform:scale(0.9620,1.055);color:#000;">11/9/2031</div>
<div class="t" style="left:1244.51px;top:495.05px;transform:scale(0.9945,1.055);color:#000;">DigiCert</div>
<svg class="ic" style="left:365px;top:527.7px" width="30" height="26" viewBox="0 0 30 26">
<rect x="1" y="1" width="26.6" height="18" fill="#f8f5ee" stroke="#8d8576" stroke-width="1.7"/>
<rect x="2.2" y="2.2" width="24.2" height="15.6" fill="none" stroke="#e9e3d6" stroke-width="0.8"/>
<rect x="5.5" y="5.6" width="16" height="1.5" fill="#7d8db8"/>
<rect x="10.5" y="9" width="6.5" height="1" fill="#a7b0c8"/>
<rect x="5" y="12.6" width="5" height="1.5" fill="#8b98c0"/>
<path d="M15.2 19 L14.6 24.2 L16.6 23 L18 24.6 L19 20.5 Z M18.6 20.5 L19.8 24.6 L21.3 23 L23.2 24.2 L22.4 19 Z" fill="#3a67cf"/>
<circle cx="18.8" cy="16.2" r="4.4" fill="#dd9c06"/>
<circle cx="18.6" cy="15.9" r="2.7" fill="#f2b81c"/>
</svg>
<div class="t" style="left:397.43px;top:528.30px;transform:scale(0.9723,1.055);color:#000;">DigiCert Global Root CA</div>
<div class="t" style="left:719.43px;top:528.30px;transform:scale(0.9723,1.055);color:#000;">DigiCert Global Root CA</div>
<div class="t" style="left:1069.80px;top:528.30px;transform:scale(0.9620,1.055);color:#000;">11/9/2031</div>
<div class="t" style="left:1244.51px;top:528.30px;transform:scale(0.9945,1.055);color:#000;">DigiCert</div>
</body></html>
